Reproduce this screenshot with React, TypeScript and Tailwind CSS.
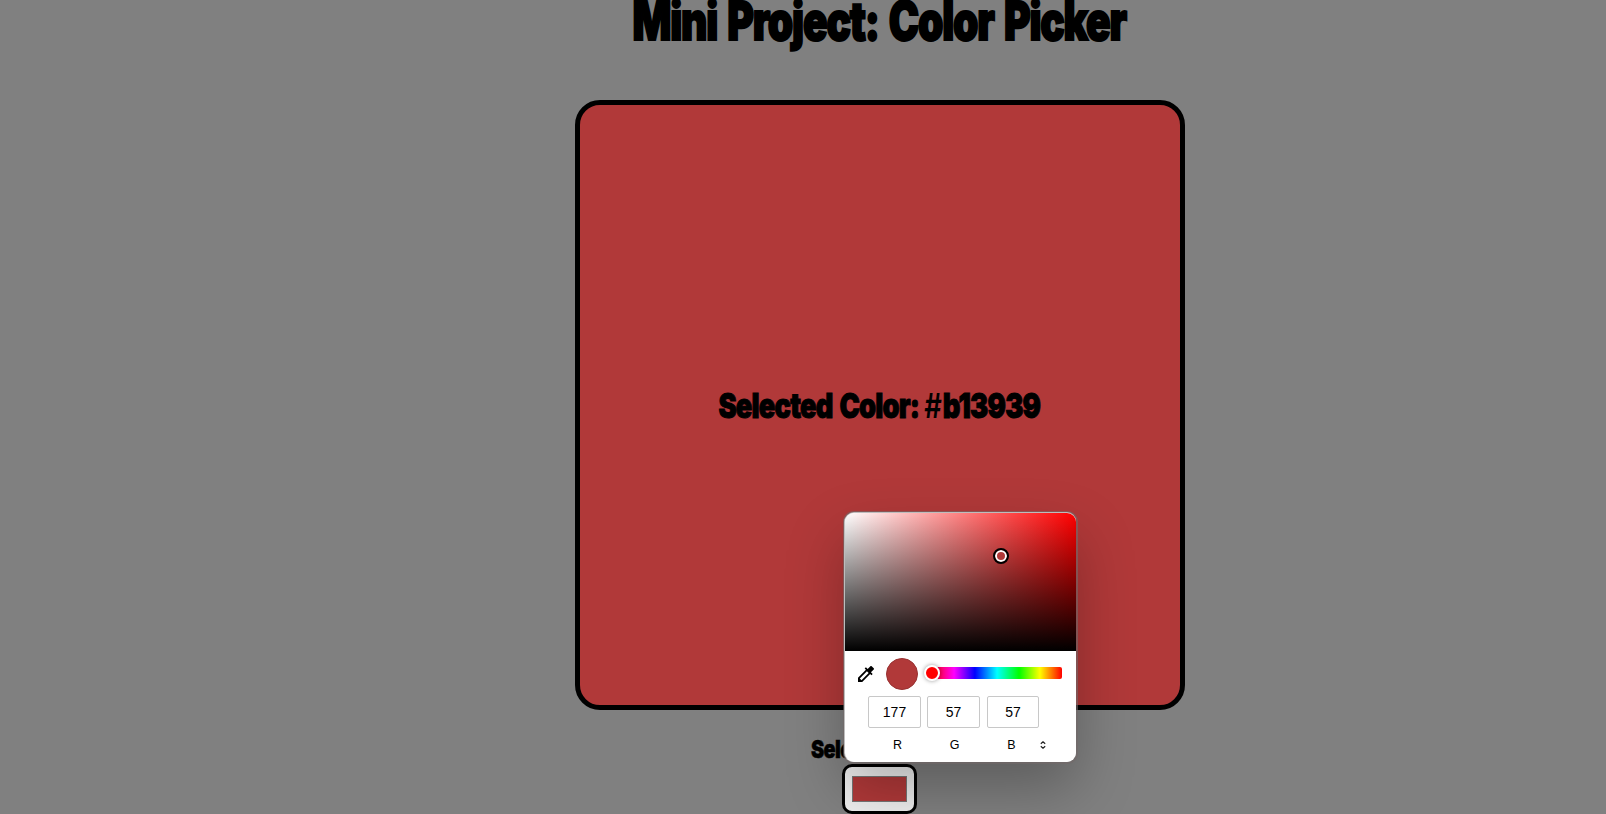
import React from "react";

type Channel = { label: string; value: number; box: string };

const HEX = "b13939";

const CHANNELS: Channel[] = [
  { label: "R", value: 177, box: "w-[53px]" },
  { label: "G", value: 57, box: "ml-1.5 w-[53px]" },
  { label: "B", value: 57, box: "ml-[7px] w-[52px]" },
];

function Headline({ children, className }: { children: React.ReactNode; className: string }) {
  return (
    <span
      className={`inline-block shrink-0 whitespace-nowrap font-['Impact','Inter',sans-serif] font-black tracking-[-0.03em] [word-spacing:0.08em] text-black [-webkit-text-stroke-color:#000] ${className}`}
    >
      {children}
    </span>
  );
}

function Eyedropper() {
  return (
    <svg viewBox="3 3 18 18" className="size-4 shrink-0">
      <path d="M20.71 5.63l-2.34-2.34c-.39-.39-1.02-.39-1.41 0l-3.12 3.12-1.93-1.91-1.41 1.41 1.42 1.42L3 16.25V21h4.75l8.92-8.92 1.42 1.42 1.41-1.41-1.92-1.92 3.12-3.12c.4-.4.4-1.03.01-1.42zM6.92 19L5 17.08l8.06-8.06 1.92 1.92L6.92 19z" />
    </svg>
  );
}

function Picker() {
  return (
    <div className="absolute bottom-[49px] left-0 h-[249px] w-[231px] rounded-[9px] bg-white font-['Liberation_Sans',sans-serif] text-black shadow-[-1px_0_0_0_#bdbdbd,0_-1px_0_0_#bdbdbd,0_0_0_2px_rgba(115,105,105,0.6),0_26px_58px_rgba(0,0,0,0.28)]">
      <div className="relative h-[138px] rounded-t-[9px] bg-[linear-gradient(to_top,#000,transparent),linear-gradient(to_right,#fff,#f00)]">
        <div className="absolute left-[148px] top-[35px] size-4 rounded-full border-2 border-black bg-[#b13939] shadow-[inset_0_0_0_2px_#fff]" />
      </div>
      <div className="flex h-[45px] items-center pl-[13px] pr-[14px] pt-px">
        <Eyedropper />
        <div className="ml-3 size-8 shrink-0 rounded-full border border-[#983131] bg-[#b13939]" />
        <div className="relative ml-[14px] h-3 flex-1 -translate-y-px rounded-[2px] bg-[linear-gradient(to_left,#f00,#ff0_17%,#0f0_33%,#0ff_50%,#00f_67%,#f0f_83%,#f00)]">
          <div className="absolute -left-2 -top-0.5 size-4 rounded-full border-2 border-white bg-[#f00] shadow-[0_0_4px_rgba(0,0,0,0.4)]" />
        </div>
      </div>
      <div className="flex pl-[23px]">
        {CHANNELS.map((c) => (
          <div
            key={c.label}
            className={`flex h-8 items-center justify-center rounded-[2px] border border-[#c8c8c8] text-sm ${c.box}`}
          >
            {c.value}
          </div>
        ))}
      </div>
      <div className="mt-[9px] flex items-center pl-[24px] text-[12.5px] leading-4">
        {CHANNELS.map((c) => (
          <div key={c.label} className="w-[57px] text-center">
            {c.label}
          </div>
        ))}
        <svg viewBox="0 0 6 8" className="h-2 w-1.5" fill="none" stroke="#222" strokeWidth="1.2">
          <path d="M.8 2.8L3 .8l2.2 2M.8 5.2L3 7.2l2.2-2" />
        </svg>
      </div>
    </div>
  );
}

export default function App() {
  return (
    <div className="flex h-[814px] flex-col items-center overflow-hidden bg-[#808080] pl-[154px]">
      <Headline className="-ml-0.5 h-[100px] scale-x-[0.768] text-[53px] leading-[43px] [-webkit-text-stroke-width:2px]">
        Mini Project: Color Picker
      </Headline>
      <div className="flex size-[610px] shrink-0 items-center justify-center rounded-[25px] border-[5px] border-black bg-[#b13939]">
        <Headline className="-ml-px scale-x-[0.803] text-[34px] [-webkit-text-stroke-width:1px]">
          Selected Color: <span className="-ml-0.5 mr-0.5 font-semibold [-webkit-text-stroke-width:0px]">#</span>
          {HEX}
        </Headline>
      </div>
      <Headline className="mt-[26px] h-7 scale-x-[0.795] text-[25px] leading-[26px] [-webkit-text-stroke-width:0.5px]">
        Select a Color:
      </Headline>
      <div className="relative -ml-px h-[50px] w-[75px] shrink-0 rounded-[10px] border-[3px] border-black bg-[#efefef] px-[7px] py-[9px]">
        <div className="h-full border border-[#777] bg-[#b13939]" />
        <Picker />
      </div>
    </div>
  );
}
